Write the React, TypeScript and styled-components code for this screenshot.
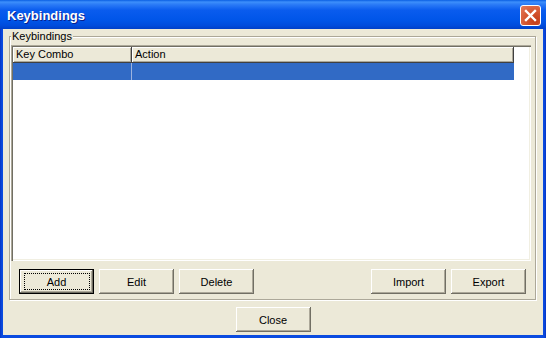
import styled, { createGlobalStyle } from "styled-components";

const GlobalStyle = createGlobalStyle`
  html, body {
    margin: 0;
    padding: 0;
    background: #0747d6;
  }
  body {
    font-family: "Liberation Sans", Arial, sans-serif;
  }
`;

const Window = styled.div`
  width: 546px;
  height: 338px;
  display: flex;
  flex-direction: column;
  background: linear-gradient(90deg, #0634c4 0px, #0a4be0 2px, #0a4be0 calc(100% - 2px), #0634c4 100%);
  box-sizing: border-box;
`;

const TitleBar = styled.div`
  height: 29px;
  flex: none;
  display: flex;
  align-items: flex-start;
  justify-content: space-between;
  padding: 0 5px 0 7px;
  background: linear-gradient(
    180deg,
    #0a5fe3 0%,
    #3d8ffb 7%,
    #2a7af6 16%,
    #0a5cee 35%,
    #0055e8 70%,
    #004cdc 88%,
    #0040c8 100%
  );
`;

const Title = styled.span`
  margin-top: 8px;
  color: #fff;
  font-family: "Liberation Sans", Arial, sans-serif;
  font-weight: bold;
  font-size: 13px;
  line-height: 16px;
  text-shadow: 1px 1px 0 #0a1f8c;
`;

const CloseX = styled.div`
  width: 21px;
  height: 21px;
  margin-top: 5px;
  box-sizing: border-box;
  border: 1px solid #fff;
  border-radius: 3px;
  background: radial-gradient(circle at 75% 80%, #c23c18 0%, #d4552f 45%, #e57b5b 100%);
  display: flex;
  align-items: center;
  justify-content: center;
`;

const Body = styled.div`
  flex: 1;
  margin: 0 3px 3px;
  background: #ece9d8;
  display: flex;
  flex-direction: column;
  padding-top: 7px;
`;

const GroupBox = styled.div`
  position: relative;
  margin-left: 6px;
  width: 527px;
  height: 264px;
  box-sizing: border-box;
  border: 1px solid #aca899;
  box-shadow: inset 1px 1px 0 #fff, 1px 1px 0 #fff;
  padding: 8px 3px 5px 1px;
  display: flex;
  flex-direction: column;
`;

const Legend = styled.span`
  position: absolute;
  top: -7px;
  left: 1px;
  padding: 0 1px;
  background: #ece9d8;
  font-size: 11px;
  line-height: 13px;
  color: #000;
`;

const ListView = styled.div`
  width: 520px;
  height: 216px;
  box-sizing: border-box;
  padding: 2px;
  background: #fff;
  box-shadow: inset 1px 1px 0 #aca899, inset 2px 2px 0 #716f64,
    inset -1px -1px 0 #fff, inset -2px -2px 0 #f1efe2;
`;

const HeaderRow = styled.div`
  display: flex;
  width: 501px;
  height: 16px;
`;

const HeaderCell = styled.div<{ $w: number }>`
  width: ${(p) => p.$w}px;
  box-sizing: border-box;
  padding-left: 3px;
  background: #ece9d8;
  font-size: 11px;
  line-height: 15px;
  color: #000;
  box-shadow: inset -1px -1px 0 #404040, inset 1px 1px 0 #fff,
    inset -2px -2px 0 #aca899;
`;

const Row = styled.div`
  display: flex;
  width: 501px;
  height: 17px;
  background: #316ac5;
`;

const RowCell = styled.div<{ $w: number; $divider?: boolean }>`
  width: ${(p) => p.$w}px;
  box-sizing: border-box;
  border-right: ${(p) => (p.$divider ? "1px solid #9db3df" : "none")};
`;

const ButtonRow = styled.div`
  display: flex;
  gap: 5px;
  margin-top: 8px;
  padding: 0 6px 0 8px;
`;

const Spacer = styled.div`
  flex: 1;
`;

const Button = styled.button<{ $default?: boolean }>`
  position: relative;
  width: 75px;
  height: 25px;
  padding: 0;
  box-sizing: border-box;
  background: #ece9d8;
  border: ${(p) => (p.$default ? "1px solid #000" : "none")};
  font-family: "Liberation Sans", Arial, sans-serif;
  font-size: 11px;
  color: #000;
  box-shadow: inset -1px -1px 0 #716f64, inset 1px 1px 0 #fff,
    inset -2px -2px 0 #aca899;

  &::after {
    content: "";
    display: ${(p) => (p.$default ? "block" : "none")};
    position: absolute;
    inset: 3px 3px 3px 4px;
    border: 1px dotted #000;
  }
`;

const Footer = styled.div`
  display: flex;
  justify-content: center;
  margin-top: 7px;
`;

export default function App() {
  return (
    <>
      <GlobalStyle />
      <Window>
        <TitleBar>
          <Title>Keybindings</Title>
          <CloseX>
            <svg width="19" height="19" viewBox="0 0 19 19">
              <path
                d="M5 5 L14 14 M14 5 L5 14"
                stroke="#fff"
                strokeWidth="2.4"
                strokeLinecap="square"
              />
            </svg>
          </CloseX>
        </TitleBar>
        <Body>
          <GroupBox>
            <Legend>Keybindings</Legend>
            <ListView>
              <HeaderRow>
                <HeaderCell $w={119}>Key Combo</HeaderCell>
                <HeaderCell $w={382}>Action</HeaderCell>
              </HeaderRow>
              <Row>
                <RowCell $w={119} $divider />
                <RowCell $w={382} />
              </Row>
            </ListView>
            <ButtonRow>
              <Button $default>Add</Button>
              <Button>Edit</Button>
              <Button>Delete</Button>
              <Spacer />
              <Button>Import</Button>
              <Button>Export</Button>
            </ButtonRow>
          </GroupBox>
          <Footer>
            <Button>Close</Button>
          </Footer>
        </Body>
      </Window>
    </>
  );
}
